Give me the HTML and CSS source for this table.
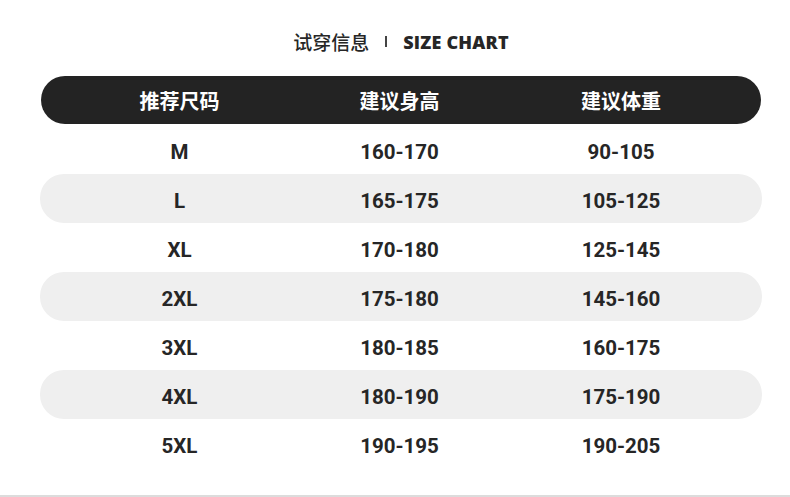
FILE: index.html
```html
<!DOCTYPE html>
<html lang="zh">
<head>
<meta charset="utf-8">
<link rel="stylesheet" href="styles.css">
</head>
<body>
<div class="page">
  <div class="title">
    <span class="title-cn">试穿信息</span>
    <span class="sep"></span>
    <span class="title-en">SIZE CHART</span>
  </div>
  <div class="table">
    <div class="row head"><span>推荐尺码</span><span>建议身高</span><span>建议体重</span></div>
    <div class="row"><span>M</span><span>160-170</span><span>90-105</span></div>
    <div class="row alt"><span>L</span><span>165-175</span><span>105-125</span></div>
    <div class="row"><span>XL</span><span>170-180</span><span>125-145</span></div>
    <div class="row alt"><span>2XL</span><span>175-180</span><span>145-160</span></div>
    <div class="row"><span>3XL</span><span>180-185</span><span>160-175</span></div>
    <div class="row alt"><span>4XL</span><span>180-190</span><span>175-190</span></div>
    <div class="row"><span>5XL</span><span>190-195</span><span>190-205</span></div>
  </div>
  <div class="bottom-line"></div>
</div>
</body>
</html>
```
FILE: styles.css
```css
html, body {
  margin: 0;
  padding: 0;
  background: #fff;
}
.page {
  width: 790px;
  height: 497px;
  display: flex;
  flex-direction: column;
}
.title {
  height: 76px;
  display: flex;
  align-items: center;
  justify-content: center;
  padding-top: 7px;
  box-sizing: border-box;
  color: #262626;
  padding-left: 12px;
}
.title-cn {
  font-family: "Noto Sans CJK SC", sans-serif;
  font-weight: 500;
  font-size: 19px;
}
.sep {
  width: 2px;
  height: 11px;
  background: #444;
  margin: 0 16px 0 16px;
}
.title-en {
  font-family: "Open Sans", sans-serif;
  font-weight: 800;
  font-size: 18px;
  letter-spacing: 0.2px;
}
.table {
  margin-left: 41px;
  width: 720px;
  display: flex;
  flex-direction: column;
}
.row {
  display: grid;
  grid-template-columns: 277px 163px 280px;
  height: 49px;
  align-items: center;
  border-radius: 24px;
  font-family: Roboto, sans-serif;
  font-weight: 700;
  font-size: 20.5px;
  color: #262626;
  padding-top: 5px;
  box-sizing: border-box;
}
.row span {
  text-align: center;
}
.row.alt {
  background: #efefef;
  margin: 0 -1px 0 -1px;
  padding-left: 1px;
  padding-right: 1px;
}
.row.head {
  height: 48px;
  padding-top: 0;
  background: #232323;
  color: #fff;
  font-family: "Noto Sans CJK SC", sans-serif;
  font-size: 20px;
  font-weight: 700;
  margin-bottom: 1px;
}
.bottom-line {
  margin-top: auto;
  height: 2px;
  background: #dcdcdc;
}
```
